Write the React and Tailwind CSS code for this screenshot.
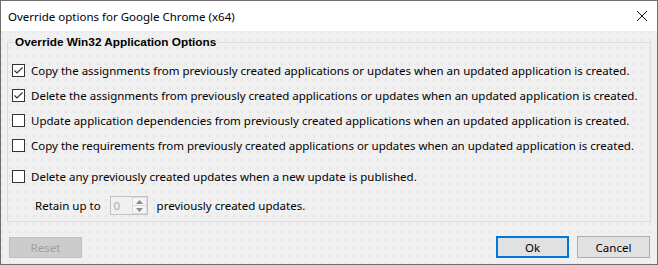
import { useState } from 'react';

const options = [
  { label: 'Copy the assignments from previously created applications or updates when an updated application is created.', checked: true },
  { label: 'Delete the assignments from previously created applications or updates when an updated application is created.', checked: true },
  { label: 'Update application dependencies from previously created applications when an updated application is created.', checked: false },
  { label: 'Copy the requirements from previously created applications or updates when an updated application is created.', checked: false },
];

const CheckBox = ({ checked, onChange }) => (
  <button
    type="button"
    onClick={onChange}
    className="w-[13px] h-[13px] shrink-0 border border-[#333333] bg-white flex items-center justify-center"
  >
    {checked && (
      <svg width="11" height="11" viewBox="0 0 11 11">
        <path d="M1.5 5.5 L4 8 L9.5 2.5" fill="none" stroke="#333333" strokeWidth="1.2" />
      </svg>
    )}
  </button>
);

const App = () => {
  const [checks, setChecks] = useState(options.map((o) => o.checked));
  const [deleteUpdates, setDeleteUpdates] = useState(false);

  const toggle = (i) => setChecks(checks.map((c, j) => (j === i ? !c : c)));

  return (
    <div className="w-[658px] h-[265px] flex flex-col border border-[#6f6f6f] text-black font-['Noto_Sans',sans-serif] text-[11.5px] leading-[15px] overflow-hidden">
      {/* Title bar */}
      <div className="h-[30px] shrink-0 bg-white flex items-center justify-between pl-[7px] pr-[9px]">
        <span className="text-[11.5px] text-black">Override options for Google Chrome (x64)</span>
        <svg width="12" height="12" viewBox="0 0 12 12">
          <path d="M1 1 L11 11 M11 1 L1 11" stroke="#111111" strokeWidth="1" />
        </svg>
      </div>

      {/* Body */}
      <div className="flex-1 flex flex-col bg-[#f0f0f0] bg-[radial-gradient(circle_at_1px_1px,#dedede_0.6px,transparent_1px)] bg-[length:8px_8px] px-[6px] pt-[4px]">
        <fieldset className="border border-[#dcdcdc] h-[187px] mx-0 pl-[4px] pr-2 pt-[14px]">
          <legend className="font-['Liberation_Sans',Arial,sans-serif] font-bold text-[11.8px] px-[1px] ml-[2px] leading-[15px]">Override Win32 Application Options</legend>

          <div className="flex flex-col gap-[12px]">
            {options.map((o, i) => (
              <label key={i} className="flex items-center gap-[6px] h-[13px]">
                <CheckBox checked={checks[i]} onChange={() => toggle(i)} />
                <span>{o.label}</span>
              </label>
            ))}
          </div>

          <label className="flex items-center gap-[6px] h-[13px] mt-[18px]">
            <CheckBox checked={deleteUpdates} onChange={() => setDeleteUpdates(!deleteUpdates)} />
            <span>Delete any previously created updates when a new update is published.</span>
          </label>

          <div className="flex items-center mt-[13px] pl-[23px]">
            <span>Retain up to</span>
            <div className="ml-[9px] w-[38px] h-[19px] border border-[#c2c2c2] bg-[#f0f0f0] flex">
              <span className="flex-1 pl-[3px] text-[#a8a8a8] leading-[17px]">0</span>
              <div className="w-[15px] flex flex-col">
                <div className="flex-1 flex items-center justify-center border border-[#dadada] bg-[#f4f4f4]">
                  <svg width="7" height="4" viewBox="0 0 7 4"><path d="M0 4 L3.5 0 L7 4 Z" fill="#8a8a8a" /></svg>
                </div>
                <div className="flex-1 flex items-center justify-center border border-t-0 border-[#dadada] bg-[#f4f4f4]">
                  <svg width="7" height="4" viewBox="0 0 7 4"><path d="M0 0 L3.5 4 L7 0 Z" fill="#8a8a8a" /></svg>
                </div>
              </div>
            </div>
            <span className="ml-[9px]">previously created updates.</span>
          </div>
        </fieldset>

        <div className="flex items-center mt-[14px] pl-[2px]">
          <button
            type="button"
            disabled
            className="w-[73px] h-[21px] bg-[#cccccc] border border-[#bfbfbf] text-[#a0a0a0]"
          >
            Reset
          </button>
          <button
            type="button"
            className="ml-auto w-[73px] h-[22px] bg-[#e1e1e1] border-2 border-[#0078d7]"
          >
            Ok
          </button>
          <button
            type="button"
            className="ml-[8px] mr-[1px] w-[73px] h-[22px] bg-[#e1e1e1] border border-[#adadad]"
          >
            Cancel
          </button>
        </div>
      </div>
    </div>
  );
};

export default App;
